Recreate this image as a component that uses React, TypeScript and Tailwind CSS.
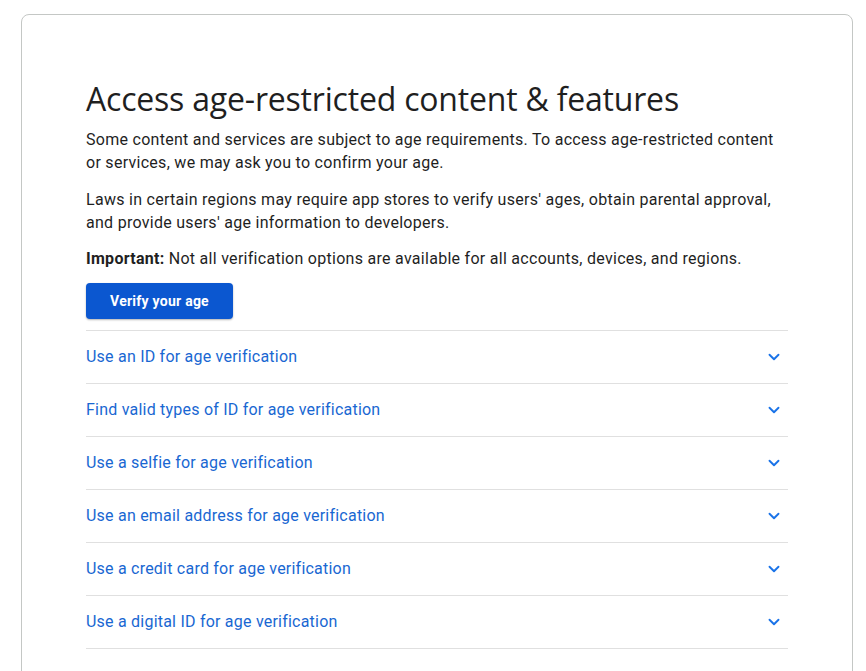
import { ChevronDown } from 'lucide-react';

const ITEMS = [
  'Use an ID for age verification',
  'Find valid types of ID for age verification',
  'Use a selfie for age verification',
  'Use an email address for age verification',
  'Use a credit card for age verification',
  'Use a digital ID for age verification',
];

export default function App() {
  return (
    <div className="h-screen overflow-hidden bg-white pt-[14px] pl-[21px]" style={{ fontFamily: 'Roboto, "Liberation Sans", sans-serif' }}>
      <div className="w-[832px] h-[700px] rounded-lg border border-[#c4c7c5] pt-[64px] pl-[64px]">
        <div className="w-[702px]">
          <h1 className="text-[32px] leading-[40px] text-[#1f1f1f] tracking-[-0.2px]" style={{ fontFamily: '"Open Sans", Roboto, sans-serif' }}>
            Access age-restricted content &amp; features
          </h1>
          <p className="mt-[9px] text-[16px] leading-[23px] tracking-[0.28px] text-[#1f1f1f]">
            Some content and services are subject to age requirements. To access age-restricted content or services, we may ask you to confirm your age.
          </p>
          <p className="mt-[14px] text-[16px] leading-[23px] tracking-[0.28px] text-[#1f1f1f]">
            Laws in certain regions may require app stores to verify users' ages, obtain parental approval, and provide users' age information to developers.
          </p>
          <p className="mt-[13px] text-[16px] leading-[23px] tracking-[0.28px] text-[#1f1f1f]">
            <b className="font-bold">Important:</b> Not all verification options are available for all accounts, devices, and regions.
          </p>
          <button className="mt-[13px] h-[36px] w-[147px] rounded bg-[#0b57d0] text-[14px] font-bold tracking-[0.25px] text-white shadow-[0_1px_2px_rgba(0,0,0,0.3)]">
            Verify your age
          </button>
          <div className="mt-[11px] border-t border-[#e0e0e0]">
            {ITEMS.map(item => (
              <div key={item} className="flex h-[53px] items-center justify-between border-b border-[#e0e0e0] pr-[5px]">
                <span className="text-[16px] tracking-[0.22px] text-[#1967d2]">{item}</span>
                <ChevronDown size={18} strokeWidth={2.5} className="text-[#1a73e8]" />
              </div>
            ))}
          </div>
        </div>
      </div>
    </div>
  );
}
